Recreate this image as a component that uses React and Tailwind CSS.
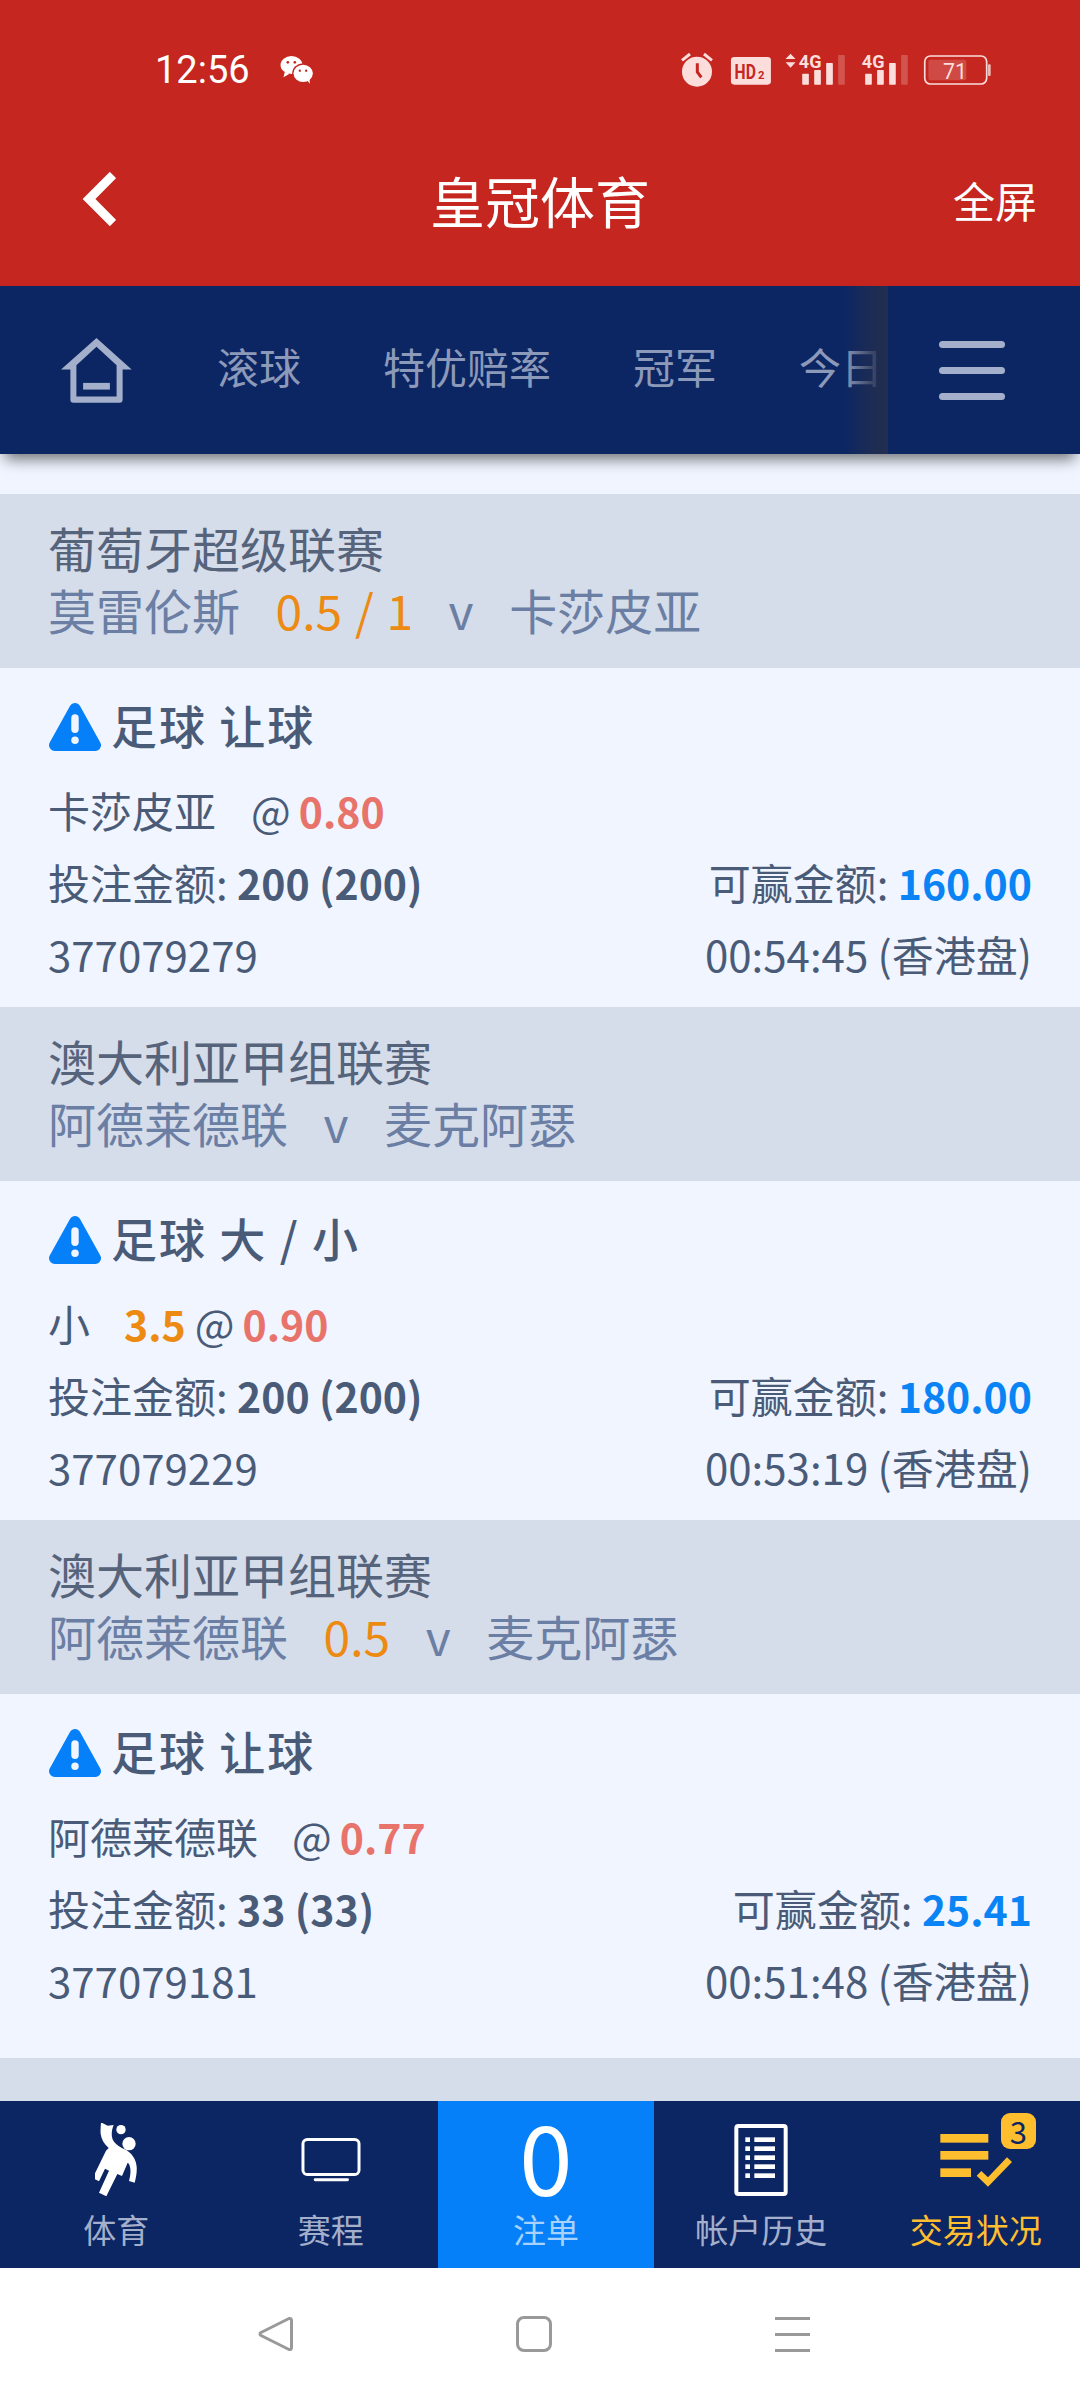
import React from "react";

const NAV_ITEMS = ["滚球", "特优赔率", "冠军", "今日"];

const BETS = [
  {
    league: "葡萄牙超级联赛",
    home: "莫雷伦斯",
    line: "0.5 / 1",
    away: "卡莎皮亚",
    type: "足球 让球",
    pick: "卡莎皮亚",
    pickGap: "ml-[35px]",
    odds: "0.80",
    stake: "200 (200)",
    win: "160.00",
    id: "377079279",
    time: "00:54:45 (香港盘)",
  },
  {
    league: "澳大利亚甲组联赛",
    home: "阿德莱德联",
    away: "麦克阿瑟",
    type: "足球 大 / 小",
    pick: "小",
    pickLine: "3.5",
    odds: "0.90",
    stake: "200 (200)",
    win: "180.00",
    id: "377079229",
    time: "00:53:19 (香港盘)",
  },
  {
    league: "澳大利亚甲组联赛",
    home: "阿德莱德联",
    line: "0.5",
    away: "麦克阿瑟",
    type: "足球 让球",
    pick: "阿德莱德联",
    pickGap: "ml-[34px]",
    odds: "0.77",
    stake: "33 (33)",
    win: "25.41",
    id: "377079181",
    time: "00:51:48 (香港盘)",
  },
];

function StatusIcons() {
  const pale = "#fbdedc";
  const bars = (x) => (
    <>
      <rect x={x} y="128" width="20" height="33" rx="2" fill={pale} />
      <rect x={x + 36} y="117" width="20" height="44" rx="2" fill={pale} />
      <rect x={x + 72} y="96" width="20" height="65" rx="2" fill={pale} />
      <rect x={x + 108} y="72" width="20" height="89" rx="2" fill={pale} fillOpacity="0.25" />
    </>
  );
  return (
    <svg width="313" height="38" viewBox="120 60 940 114">
      <circle cx="171" cy="122" r="45" fill={pale} />
      <path d="M172 97v26l12 16" fill="none" stroke="#c5261f" strokeWidth="9" />
      <path d="M126 88l24-19M216 88l-24-19" stroke={pale} strokeWidth="9" />
      <rect x="273" y="78" width="120" height="83" rx="10" fill={pale} />
      <text x="284" y="145" fontSize="62" fontWeight="700" fontFamily="Roboto" fill="#c5261f" textLength="64" lengthAdjust="spacingAndGlyphs">HD</text>
      <text x="354" y="145" fontSize="34" fontWeight="700" fontFamily="Roboto" fill="#c5261f">2</text>
      <path d="M452 68l15 16h-30zM452 110l15-16h-30z" fill={pale} />
      <text x="477" y="112" fontSize="56" fontWeight="700" fontFamily="Roboto" fill={pale} textLength="68" lengthAdjust="spacingAndGlyphs">4G</text>
      {bars(487)}
      <text x="666" y="112" fontSize="56" fontWeight="700" fontFamily="Roboto" fill={pale} textLength="68" lengthAdjust="spacingAndGlyphs">4G</text>
      {bars(676)}
      <rect x="855" y="75" width="186" height="84" rx="17" fill="none" stroke={pale} strokeWidth="5" />
      <rect x="866" y="86" width="114" height="62" rx="6" fill={pale} fillOpacity="0.2" />
      <rect x="1045" y="100" width="8" height="35" rx="3" fill={pale} fillOpacity="0.8" />
      <text x="946" y="144" fontSize="68" textAnchor="middle" fontFamily="Roboto" fill={pale} textLength="72" lengthAdjust="spacingAndGlyphs">71</text>
    </svg>
  );
}

function WechatIcon() {
  return (
    <svg width="37" height="30" viewBox="25 30 110 90">
      <ellipse cx="62" cy="60" rx="33" ry="27" fill="#fff" />
      <path d="M42 80l-4 17 18-11z" fill="#fff" />
      <circle cx="51" cy="52" r="4" fill="#c5261f" />
      <circle cx="72" cy="52" r="4" fill="#c5261f" />
      <ellipse cx="97" cy="85" rx="33" ry="30" fill="#c5261f" />
      <ellipse cx="97" cy="85" rx="29" ry="26" fill="#fff" />
      <path d="M108 105l9 11-1-20z" fill="#fff" />
      <circle cx="87" cy="77" r="3.5" fill="#c5261f" />
      <circle cx="106" cy="77" r="3.5" fill="#c5261f" />
    </svg>
  );
}

function HomeIcon() {
  return (
    <svg width="71" height="65" viewBox="62 52 212 194" fill="#a3afcb">
      <path
        fillRule="evenodd"
        d="M168 52L273 146H246V236Q246 245 237 245H99Q90 245 90 236V146H62ZM168 78L108 133V227H228V133Z"
      />
      <rect x="128" y="186" width="80" height="20" />
    </svg>
  );
}

function WarningIcon() {
  return (
    <svg className="ml-[1px] mt-[6px]" width="52" height="48" viewBox="88 43 154 142">
      <path
        d="M165 60L225 168H105Z"
        fill="#0580f9"
        stroke="#0580f9"
        strokeWidth="34"
        strokeLinejoin="round"
      />
      <rect x="154" y="76" width="22" height="56" rx="11" fill="#f0f5ff" />
      <circle cx="165" cy="153" r="11" fill="#f0f5ff" />
    </svg>
  );
}

function PlayerIcon() {
  return (
    <svg width="42" height="74" viewBox="105 55 126 222" fill="#fff">
      <circle cx="183" cy="75" r="14" />
      <circle cx="207" cy="117" r="20" />
      <path d="M143 63l18-2c-5 12-7 24-5 36 3 18 20 28 38 37 20 10 34 28 36 52 1 14-1 30-6 48l-17-5c4-16 6-30 3-42-1-6-3-10-7-13l-17 40-14-6-33 67-22-11 30-66-12-6-18 38-19-10 40-82 8-8c-14-12-22-26-24-42-1-10 0-21 1-35z" />
    </svg>
  );
}

function ScheduleIcon() {
  return (
    <svg width="60" height="46" viewBox="725 100 182 136" fill="none" stroke="#fff">
      <rect x="731" y="106" width="170" height="106" rx="13" strokeWidth="9" />
      <path d="M768 228H866" strokeWidth="9" strokeLinecap="round" />
    </svg>
  );
}

function HistoryIcon() {
  const rows = [107, 134, 161, 188, 215];
  return (
    <svg width="54" height="72" viewBox="100 60 160 216">
      <rect x="106" y="66" width="148" height="204" rx="6" fill="none" stroke="#fff" strokeWidth="12" />
      {rows.map((y) => (
        <g key={y} fill="#fff">
          <rect x="133" y={y - 7} width="14" height="14" />
          <rect x="160" y={y - 7} width="62" height="14" />
        </g>
      ))}
    </svg>
  );
}

function StatusListIcon() {
  return (
    <div className="relative w-[72px] h-[53px]">
      <svg width="72" height="53" viewBox="715 87 216 159" fill="#ffbe2e">
        <rect x="716" y="87" width="144" height="26" />
        <rect x="716" y="138" width="144" height="26" />
        <rect x="716" y="190" width="92" height="26" />
        <path d="M825 212l14-14 20 19 57-60 15 14-72 74z" />
      </svg>
      <div className="absolute left-[61px] top-[-21px] w-[35px] h-[36px] rounded-[9px] bg-[#ffbe2e] text-[#0c2663] text-[31px] leading-[36px] text-center">
        3
      </div>
    </div>
  );
}

function BetBlock({ bet, last }) {
  return (
    <>
      <div className="bg-[#d5dcea] h-[174px] px-[48px] pt-[22px] text-[48px] leading-[62px]">
        <div className="text-[#55637b]">{bet.league}</div>
        <div className="flex gap-[35.5px] text-[#6b7ea3]">
          <span>{bet.home}</span>
          {bet.line && (
            <span className="text-[#ec8a12] whitespace-pre [word-spacing:2px]">{bet.line}</span>
          )}
          <span>v</span>
          <span>{bet.away}</span>
        </div>
      </div>
      <div className={`px-[48px] pt-[29px] text-[42px] text-[#4a5b78] ${last ? "h-[364px]" : "h-[339px]"}`}>
        <div className="flex items-center h-[54px] gap-[10px]">
          <WarningIcon />
          <span className="text-[46px] font-medium tracking-[2px] whitespace-pre">{bet.type}</span>
        </div>
        <div className="flex items-center h-[72px] mt-[23px] leading-[72px]">
          <span>{bet.pick}</span>
          {bet.pickLine && (
            <span className="ml-[34px] font-bold text-[41px] text-[#ec8a12]">{bet.pickLine}</span>
          )}
          <span className={`${bet.pickGap || "ml-[9px]"} mr-[8px]`}>@</span>
          <span className="font-bold text-[41px] text-[#e8736a]">{bet.odds}</span>
        </div>
        <div className="flex justify-between h-[72px] leading-[72px]">
          <div>
            投注金额: <span className="font-bold text-[41px]">{bet.stake}</span>
          </div>
          <div>
            可赢金额: <span className="font-bold text-[41px] text-[#0a84f5]">{bet.win}</span>
          </div>
        </div>
        <div className="flex justify-between h-[72px] leading-[72px]">
          <span>{bet.id}</span>
          <span>{bet.time}</span>
        </div>
      </div>
    </>
  );
}

function TabItem({ icon, label, className = "w-[214.5px]", labelClass = "text-[#a3afcb]" }) {
  return (
    <div className={`shrink-0 flex flex-col items-center pt-[9px] ${className}`}>
      <div className="h-[100px] flex items-center justify-center">{icon}</div>
      <div className={`h-[44px] -mt-[3px] text-[33px] leading-[44px] ${labelClass}`}>{label}</div>
    </div>
  );
}

export default function App() {
  return (
    <div className="w-[1080px] h-[2400px] flex flex-col overflow-hidden bg-[#f0f5ff] font-['Noto_Sans_CJK_SC','Noto_Sans',sans-serif]">
      {/* Status bar and title */}
      <div className="bg-[#c5261f] h-[286px] shrink-0 text-white">
        <div className="h-[140px] flex items-center pl-[155px] pr-[87px]">
          <span className="font-['Roboto'] text-[38px] w-[124px]">12:56</span>
          <WechatIcon />
          <div className="ml-auto">
            <StatusIcons />
          </div>
        </div>
        <div className="h-[120px] -mt-[1px] grid grid-cols-[1fr_auto_1fr] items-center px-[43px]">
          <svg className="ml-[39px]" width="34" height="54" viewBox="0 0 34 54" fill="none" stroke="#fff" strokeWidth="9">
            <path d="M31 3L7 27l24 24" />
          </svg>
          <div className="text-[55px] leading-[70px]">皇冠体育</div>
          <div className="text-[42px] justify-self-end">全屏</div>
        </div>
      </div>

      {/* Sport nav */}
      <div className="relative z-10 h-[168px] shrink-0 flex bg-[#0c2663] shadow-[0_10px_14px_-5px_rgba(0,0,0,0.55)]">
        <div className="relative flex-1 min-w-0 flex items-center overflow-hidden pl-[61px]">
          <HomeIcon />
          <div className="flex ml-[85px] mb-[10px] gap-[82px] text-[42px] text-[#8c99b9] whitespace-nowrap">
            {NAV_ITEMS.map((item) => (
              <span key={item}>{item}</span>
            ))}
          </div>
          <div className="absolute right-0 inset-y-0 w-[44px] bg-gradient-to-r from-[#0c266300] via-[#232e4fb8] via-60% to-[#232e4f]" />
        </div>
        <div className="w-[192px] shrink-0 flex flex-col justify-center gap-[19px] pl-[51px]">
          <div className="w-[66px] h-[7px] rounded-full bg-[#a3afcb]" />
          <div className="w-[66px] h-[7px] rounded-full bg-[#a3afcb]" />
          <div className="w-[66px] h-[7px] rounded-full bg-[#a3afcb]" />
        </div>
      </div>

      {/* Bets */}
      <div className="flex-1 min-h-0 overflow-hidden pt-[40px]">
        {BETS.map((bet, i) => (
          <BetBlock key={bet.id} bet={bet} last={i === BETS.length - 1} />
        ))}
        <div className="bg-[#d5dcea] h-[44px]" />
      </div>

      {/* Tab bar */}
      <div className="h-[167px] shrink-0 flex overflow-hidden bg-[#0c2663] pl-[9px]">
        <TabItem icon={<PlayerIcon />} label="体育" />
        <TabItem icon={<ScheduleIcon />} label="赛程" />
        <TabItem
          icon={<span className="mb-[10px] text-white text-[96px] leading-[100px]">0</span>}
          label="注单"
          className="w-[216px] bg-[#0580f9]"
          labelClass="text-[#a8d2fb]"
        />
        <TabItem icon={<HistoryIcon />} label="帐户历史" />
        <TabItem icon={<StatusListIcon />} label="交易状况" labelClass="text-[#ffbe2e]" />
      </div>

      {/* Android nav */}
      <div className="h-[132px] shrink-0 bg-white flex items-center pl-[258px] gap-[223px]">
        <svg width="35" height="36" viewBox="0 0 35 36" fill="none" stroke="#999" strokeWidth="3" strokeLinejoin="round">
          <path d="M31 2.500Q33.500 2 33.500 4.500V31.500Q33.500 34 31 33.500L3 19.500Q1 18 3 16.500Z" />
        </svg>
        <div className="w-[36px] h-[36px] rounded-[8px] border-[3px] border-[#999]" />
        <div className="w-[35px] flex flex-col gap-[13px]">
          <div className="h-[3px] bg-[#999]" />
          <div className="h-[3px] bg-[#999]" />
          <div className="h-[3px] bg-[#999]" />
        </div>
      </div>
    </div>
  );
}
